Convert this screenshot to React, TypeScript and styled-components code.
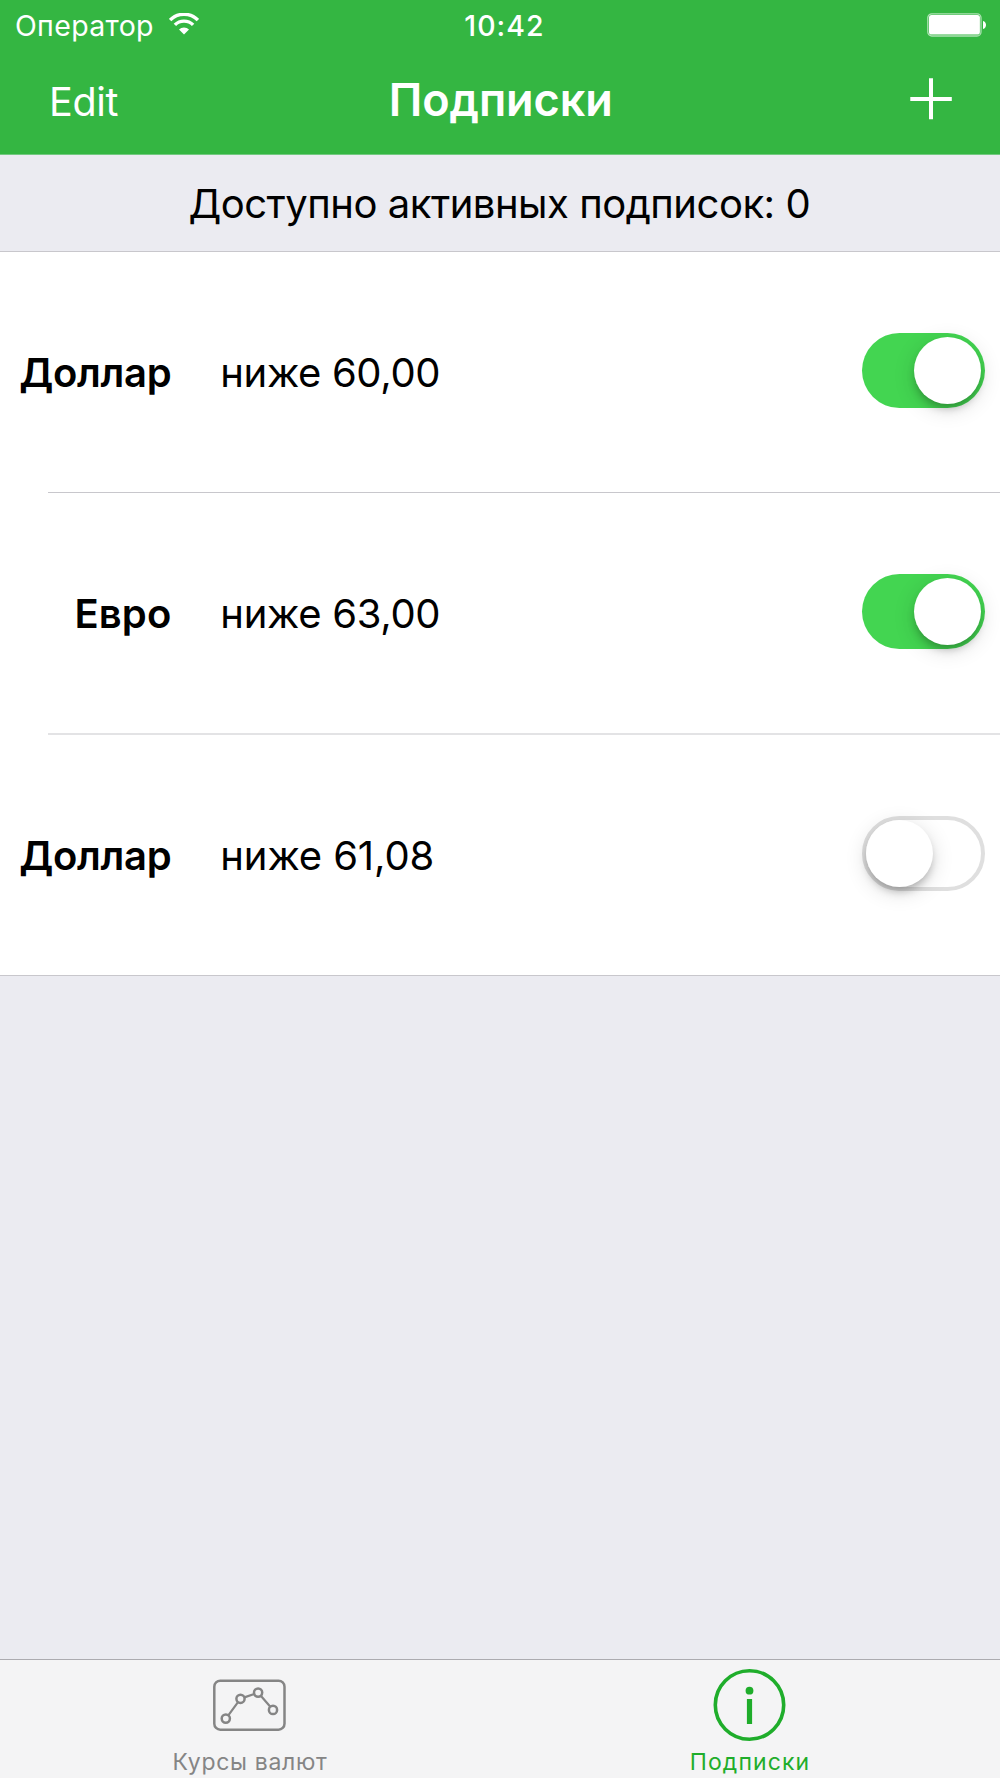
import React, { useState } from "react";
import styled, { createGlobalStyle } from "styled-components";

const GlobalStyle = createGlobalStyle`
  *, *::before, *::after { box-sizing: border-box; }
  body {
    margin: 0;
    background: #ebebf1;
    font-family: Inter, "Liberation Sans", sans-serif;
    color: #000;
  }
  button { font: inherit; color: inherit; border: 0; background: none; padding: 0; }
`;

const Screen = styled.div`
  display: flex;
  flex-direction: column;
  width: 1000px;
  height: 1778px;
  overflow: hidden;
  background: #ebebf1;
`;

const Header = styled.header`
  flex: none;
  height: 155px;
  background: #34b642;
  border-bottom: 1px solid #72c980;
  color: #fff;
`;

const StatusBar = styled.div`
  display: grid;
  grid-template-columns: 1fr auto 1fr;
  align-items: center;
  height: 48px;
  padding: 2px 13px 0 15px;
  font-size: 28.5px;
  line-height: 48px;
`;

const Carrier = styled.div`
  display: flex;
  align-items: center;
  gap: 15px;
  letter-spacing: 0.33px;
`;

const Clock = styled.time`
  padding-left: 7px;
  font-weight: 500;
  letter-spacing: 1.05px;
`;

const BatterySlot = styled.div`
  display: flex;
  justify-content: flex-end;
  padding-bottom: 3px;
`;

const NavBar = styled.nav`
  display: grid;
  grid-template-columns: 1fr auto 1fr;
  align-items: center;
  height: 106px;
  padding: 0 48.5px 0 49px;
`;

const EditButton = styled.button`
  justify-self: start;
  padding-top: 2px;
  font-size: 39.5px;
  line-height: 104px;
  letter-spacing: -0.35px;
`;

const Title = styled.h1`
  margin: 0;
  padding: 0 0 2px 1px;
  font-size: 45px;
  font-weight: 600;
  line-height: 104px;
  letter-spacing: -0.1px;
`;

const AddButton = styled.button`
  display: flex;
  justify-self: end;
  padding-bottom: 5px;
`;

const Summary = styled.p`
  flex: none;
  height: 96px;
  margin: 0;
  padding: 1px 1.5px 0 0;
  font-size: 40px;
  line-height: 96px;
  letter-spacing: -0.488px;
  text-align: center;
`;

const List = styled.ul`
  flex: none;
  margin: 0;
  padding: 0;
  list-style: none;
  background: #fff;
  border-top: 1px solid #c8c7cc;
  border-bottom: 1px solid #c8c7cc;
`;

const Row = styled.li`
  display: grid;
  grid-template-columns: 171.4px 1fr auto;
  align-items: center;
  height: 240px;
  padding-right: 15px;
  font-size: 40px;
  line-height: 60px;
`;

const Divider = styled.li<{ $soft?: boolean }>`
  height: ${(p) => (p.$soft ? 2 : 1)}px;
  margin-left: 48px;
  background: ${(p) => (p.$soft ? "#e3e3e5" : "#c8c7cc")};
`;

const Currency = styled.span<{ $tracking: number }>`
  padding-top: 2px;
  font-weight: 600;
  text-align: right;
  letter-spacing: ${(p) => p.$tracking}px;
`;

const Condition = styled.span<{ $tracking: number }>`
  padding: 2px 0 0 48.9px;
  letter-spacing: ${(p) => p.$tracking}px;
`;

const Track = styled.button<{ $on: boolean }>`
  display: flex;
  align-items: center;
  justify-content: ${(p) => (p.$on ? "flex-end" : "flex-start")};
  width: 123px;
  height: 75px;
  margin-bottom: 3px;
  padding: ${(p) => (p.$on ? "0 4px" : "0")};
  border: ${(p) => (p.$on ? "0" : "4px solid #dfdfdf")};
  border-radius: 38px;
  background: ${(p) => (p.$on ? "#43d551" : "#fff")};
`;

const Knob = styled.span`
  width: 67px;
  height: 67px;
  border-radius: 50%;
  background: #fff;
  box-shadow: 0 6px 9px -2px rgba(0, 0, 0, 0.26), 0 5px 22px rgba(0, 0, 0, 0.14);
`;

const Spacer = styled.div`
  flex: 1;
`;

const TabBar = styled.nav`
  flex: none;
  display: grid;
  grid-template-columns: 1fr 1fr;
  height: 119px;
  background: #f4f4f5;
  border-top: 1px solid #acabb0;
`;

const Tab = styled.button<{ $active?: boolean }>`
  display: flex;
  flex-direction: column;
  align-items: center;
  padding: 8px 1px 0 0;
  color: ${(p) => (p.$active ? "#1fad2b" : "#858585")};
`;

const TabLabel = styled.span<{ $tracking: number }>`
  padding: 5px 0 0 1px;
  font-size: 23px;
  line-height: 32px;
  letter-spacing: ${(p) => p.$tracking}px;
`;

const WifiIcon = () => (
  <svg width="30" height="26" viewBox="0 0 30 26" fill="none" stroke="#fff">
    <path d="M1.07 7.07A19.7 19.7 0 0 1 28.93 7.07" strokeWidth="3.5" />
    <path d="M5.88 11.88A12.9 12.9 0 0 1 24.12 11.88" strokeWidth="3.4" />
    <path d="M15 21.6L9.98 16.58A7.1 7.1 0 0 1 20.02 16.58Z" fill="#fff" stroke="none" />
  </svg>
);

const BatteryIcon = () => (
  <svg width="60" height="24" viewBox="0 0 60 24">
    <rect x="0.8" y="0.8" width="53.2" height="22.2" rx="4" fill="none" stroke="#fff" strokeOpacity="0.6" strokeWidth="1.3" />
    <rect x="2" y="1.9" width="50.9" height="19.7" rx="2.6" fill="#fff" />
    <path d="M56 8C60 9 60 15 56 16Z" fill="#fff" />
  </svg>
);

const PlusIcon = () => (
  <svg width="42" height="42" viewBox="0 0 42 42" stroke="#fff" strokeWidth="4">
    <path d="M21 0.3V41.3M0.3 21H41.8" />
  </svg>
);

const ChartIcon = () => (
  <svg width="73" height="73" viewBox="0 0 73 73" fill="none" stroke="currentColor" strokeWidth="2.5">
    <rect x="1.3" y="12.7" width="70.2" height="49" rx="6" />
    <circle cx="12.8" cy="50.6" r="4.1" />
    <circle cx="27.5" cy="30.8" r="4.1" />
    <circle cx="45.1" cy="24.6" r="4.1" />
    <circle cx="60" cy="41.9" r="4.1" />
    <path d="M15.3 47.3L25 34.2M31.4 29.4L41.2 26M47.8 27.8L57.3 38.7" strokeWidth="2.2" />
  </svg>
);

const InfoIcon = () => (
  <svg width="73" height="73" viewBox="0 0 73 73">
    <circle cx="36.5" cy="37" r="34.2" fill="none" stroke="currentColor" strokeWidth="3.6" />
    <circle cx="36.5" cy="22.7" r="3.9" fill="currentColor" />
    <rect x="33.9" y="31" width="5.2" height="25" fill="currentColor" />
  </svg>
);

interface Subscription {
  currency: string;
  condition: string;
  enabled: boolean;
  currencyTracking: number;
  conditionTracking: number;
}

const initialSubscriptions: Subscription[] = [
  { currency: "Доллар", condition: "ниже 60,00", enabled: true, currencyTracking: -0.3, conditionTracking: -0.35 },
  { currency: "Евро", condition: "ниже 63,00", enabled: true, currencyTracking: 0.1, conditionTracking: -0.3 },
  { currency: "Доллар", condition: "ниже 61,08", enabled: false, currencyTracking: -0.3, conditionTracking: -0.1 },
];

export default function App() {
  const [subscriptions, setSubscriptions] = useState(initialSubscriptions);
  const toggle = (index: number) =>
    setSubscriptions((all) => all.map((s, i) => (i === index ? { ...s, enabled: !s.enabled } : s)));

  return (
    <Screen>
      <GlobalStyle />
      <Header>
        <StatusBar>
          <Carrier>
            Оператор
            <WifiIcon />
          </Carrier>
          <Clock>10:42</Clock>
          <BatterySlot>
            <BatteryIcon />
          </BatterySlot>
        </StatusBar>
        <NavBar>
          <EditButton>Edit</EditButton>
          <Title>Подписки</Title>
          <AddButton>
            <PlusIcon />
          </AddButton>
        </NavBar>
      </Header>
      <Summary>Доступно активных подписок: 0</Summary>
      <List>
        {subscriptions.map((s, i) => (
          <React.Fragment key={i}>
            {i > 0 && <Divider $soft={i === 2} />}
            <Row>
              <Currency $tracking={s.currencyTracking}>{s.currency}</Currency>
              <Condition $tracking={s.conditionTracking}>{s.condition}</Condition>
              <Track $on={s.enabled} onClick={() => toggle(i)}>
                <Knob />
              </Track>
            </Row>
          </React.Fragment>
        ))}
      </List>
      <Spacer />
      <TabBar>
        <Tab>
          <ChartIcon />
          <TabLabel $tracking={0.68}>Курсы валют</TabLabel>
        </Tab>
        <Tab $active>
          <InfoIcon />
          <TabLabel $tracking={1.1}>Подписки</TabLabel>
        </Tab>
      </TabBar>
    </Screen>
  );
}
